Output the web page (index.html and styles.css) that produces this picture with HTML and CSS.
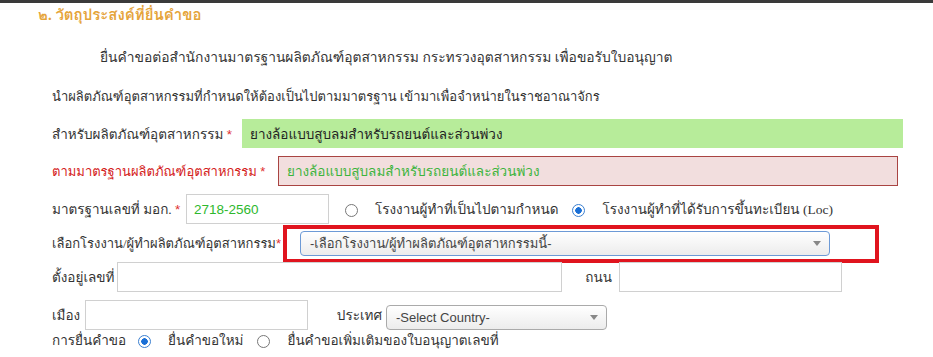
FILE: index.html
```html
<!DOCTYPE html>
<html lang="th">
  <head>
    <meta charset="UTF-8" />
    <meta name="viewport" content="width=device-width, initial-scale=1.0" />
    <title>วัตถุประสงค์ที่ยื่นคำขอ</title>
    <link rel="stylesheet" href="styles.css">
  </head>
  <body>
    <div class="topbar"></div>

    <div class="section">
      <h3 class="section__title">๒. วัตถุประสงค์ที่ยื่นคำขอ</h3>

      <div class="form">
        <div class="row row--intro">
          ยื่นคำขอต่อสำนักงานมาตรฐานผลิตภัณฑ์อุตสาหกรรม กระทรวงอุตสาหกรรม เพื่อขอรับใบอนุญาต
        </div>
        <div class="row row--text">
          นำผลิตภัณฑ์อุตสาหกรรมที่กำหนดให้ต้องเป็นไปตามมาตรฐาน เข้ามาเพื่อจำหน่ายในราชอาณาจักร
        </div>

        <div class="row row--product">
          <label class="label label--product">สำหรับผลิตภัณฑ์อุตสาหกรรม <span class="req">*</span></label>
          <div class="box box--ok">ยางล้อแบบสูบลมสำหรับรถยนต์และส่วนพ่วง</div>
        </div>

        <div class="row row--standard">
          <label class="label label--error">ตามมาตรฐานผลิตภัณฑ์อุตสาหกรรม <span class="req">*</span></label>
          <div class="box box--error">ยางล้อแบบสูบลมสำหรับรถยนต์และส่วนพ่วง</div>
        </div>

        <div class="row row--number">
          <label class="label label--number">มาตรฐานเลขที่ มอก. <span class="req">*</span></label>
          <div class="input input--number">2718-2560</div>
          <span class="radio radio--first"></span>
          <span class="radio__text">โรงงานผู้ทำที่เป็นไปตามกำหนด</span>
          <span class="radio radio--checked radio--second"></span>
          <span class="radio__text">โรงงานผู้ทำที่ได้รับการขึ้นทะเบียน (Loc)</span>
        </div>

        <div class="row row--factory">
          <label class="label label--factory">เลือกโรงงาน/ผู้ทำผลิตภัณฑ์อุตสาหกรรม<span class="req">*</span></label>
          <div class="select select--factory">
            <span class="select__text--thai">-เลือกโรงงาน/ผู้ทำผลิตภัณฑ์อุตสาหกรรมนี้-</span>
            <span class="select__arrow"></span>
          </div>
          <div class="highlight"></div>
        </div>

        <div class="row row--address">
          <label class="label label--address">ตั้งอยู่เลขที่</label>
          <div class="input input--address"></div>
          <label class="label label--road">ถนน</label>
          <div class="input input--road"></div>
        </div>

        <div class="row row--city">
          <label class="label label--city">เมือง</label>
          <div class="input input--city"></div>
          <label class="label label--country">ประเทศ</label>
          <div class="select select--country">
            <span>-Select Country-</span>
            <span class="select__arrow"></span>
          </div>
        </div>

        <div class="row row--request">
          <label class="label label--request">การยื่นคำขอ</label>
          <span class="radio radio--checked radio--new"></span>
          <span class="radio__text">ยื่นคำขอใหม่</span>
          <span class="radio radio--extra"></span>
          <span class="radio__text">ยื่นคำขอเพิ่มเติมของใบอนุญาตเลขที่</span>
        </div>
      </div>
    </div>
  </body>
</html>
```

FILE: styles.css
```css
body {
  margin: 0;
  font-family: "Liberation Serif", Loma, serif;
  font-size: 13.5px;
  color: #333;
  background: #fff;
}

.topbar {
  height: 3px;
  background-color: #3a3a3a;
}

.section__title {
  margin: 0 0 0 38px;
  height: 24px;
  line-height: 24px;
  font-size: 15px;
  font-weight: bold;
  color: #e5a43a;
}

.form {
  display: flex;
  flex-direction: column;
  padding-left: 52px;
}

.row {
  display: flex;
  align-items: center;
  position: relative;
  height: 30px;
  white-space: nowrap;
}

.row--intro {
  margin-top: 15px;
  padding-left: 48px;
  font-size: 13.8px;
}

.row--text {
  margin-top: 9px;
  font-size: 13px;
}

.row--product {
  margin-top: 8px;
  height: 29px;
}

.row--standard,
.row--number,
.row--city {
  margin-top: 8px;
}

.row--factory {
  margin-top: 1px;
  height: 37px;
}

.row--request {
  height: 20px;
}

.label {
  flex-shrink: 0;
}

.req {
  color: #e03030;
  font-family: "Liberation Sans", Arial, sans-serif;
}

.label--product { width: 190px; }
.label--error { width: 226px; color: #d42020; font-size: 13px; }
.label--number { width: 134px; }
.label--factory { width: 248px; font-size: 13px; }
.label--address { width: 65px; }
.label--road { width: 57px; text-align: right; padding-right: 7px; box-sizing: border-box; }
.label--city { width: 33px; }
.label--country { width: 78px; text-align: right; padding-right: 4px; box-sizing: border-box; }
.label--request { width: 86px; }

.box {
  box-sizing: border-box;
  height: 100%;
  display: flex;
  align-items: center;
  padding-left: 8px;
}

.box--ok {
  width: 661px;
  background-color: #b7ec9a;
  color: #222;
}

.box--error {
  width: 620px;
  background-color: #f2dede;
  border: 1px solid #a94442;
  color: #3cb43c;
}

.input {
  box-sizing: border-box;
  height: 30px;
  border: 1px solid #d0d0d0;
  display: flex;
  align-items: center;
  padding-left: 7px;
  background: #fff;
}

.input--number {
  width: 143px;
  color: #2eb82e;
  font-family: "Liberation Sans", Arial, sans-serif;
}

.input--address { width: 445px; }
.input--road { width: 223px; }
.input--city { width: 223px; }

.radio {
  box-sizing: border-box;
  width: 13px;
  height: 13px;
  border: 1px solid #777;
  border-radius: 50%;
  flex-shrink: 0;
  margin-top: 2px;
}

.radio--checked {
  border-color: #3b7fd0;
  background: radial-gradient(circle, #1a6fd6 0, #1a6fd6 3px, #fff 3.5px);
}

.radio__text {
  margin-left: 17px;
}

.radio--first { margin-left: 16px; }
.radio--second { margin-left: 14px; }
.radio--new { margin-left: 0; }
.radio--extra { margin-left: 14px; }

.select {
  box-sizing: border-box;
  display: flex;
  align-items: center;
  justify-content: space-between;
  height: 25px;
  padding: 0 8px 0 9px;
  border: 1px solid #aaa;
  border-radius: 4px;
  background: linear-gradient(#ffffff, #ececec);
  font-family: "Liberation Sans", Arial, sans-serif;
  font-size: 13px;
  color: #444;
}

.select--factory {
  width: 530px;
  border-color: #6d9ad6;
}

.select__text--thai {
  font-family: "Liberation Sans", Loma, sans-serif;
}

.select--country {
  width: 221px;
  margin-top: 4px;
}

.select__arrow {
  width: 0;
  height: 0;
  border-left: 4px solid transparent;
  border-right: 4px solid transparent;
  border-top: 5px solid #888;
}

.highlight {
  position: absolute;
  left: 231px;
  top: 0;
  width: 596px;
  height: 38px;
  box-sizing: border-box;
  border: 4px solid #e0141e;
}
```
